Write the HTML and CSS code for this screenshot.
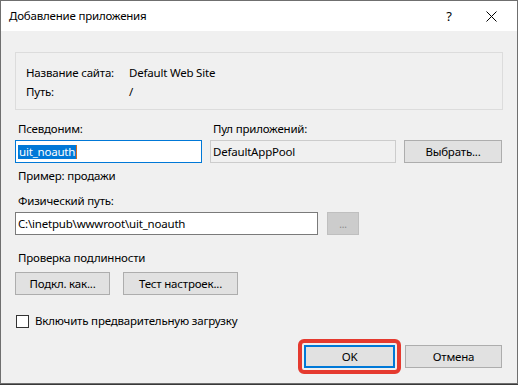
FILE: index.html
```html
<!DOCTYPE html>
<html lang="ru">
<head>
<meta charset="utf-8">
<title>Добавление приложения</title>
<link rel="stylesheet" href="styles.css">
</head>
<body>
<div class="window">
  <div class="titlebar">
    <span class="title">Добавление приложения</span>
    <span class="help">?</span>
    <span class="close"><svg width="11" height="11" viewBox="0 0 11 11"><path d="M0.5 0.5L10.5 10.5M10.5 0.5L0.5 10.5" stroke="#000" stroke-width="1" fill="none"/></svg></span>
  </div>
  <div class="content">
    <div class="groupbox">
      <div class="info-row"><span class="info-label">Название сайта:</span><span>Default Web Site</span></div>
      <div class="info-row"><span class="info-label">Путь:</span><span>/</span></div>
    </div>

    <div class="pair-row">
      <div class="col col-alias">
        <div class="label">Псевдоним:</div>
        <div class="input input-focus"><span class="selected">uit_noauth</span><span class="caret"></span></div>
      </div>
      <div class="col col-pool">
        <div class="label">Пул приложений:</div>
        <div class="field-row">
          <div class="input input-readonly">DefaultAppPool</div>
          <div class="button btn-select">Выбрать...</div>
        </div>
      </div>
    </div>

    <div class="label example">Пример: продажи</div>

    <div class="label phys-label">Физический путь:</div>
    <div class="field-row">
      <div class="input input-path">C:\inetpub\wwwroot\uit_noauth</div>
      <div class="button btn-browse">...</div>
    </div>

    <div class="label auth-label">Проверка подлинности</div>
    <div class="field-row auth-row">
      <div class="button btn-connect">Подкл. как...</div>
      <div class="button btn-test">Тест настроек...</div>
    </div>

    <label class="check-row"><span class="checkbox"></span><span>Включить предварительную загрузку</span></label>

    <div class="footer">
      <div class="highlight"><div class="button btn-ok">OK</div></div>
      <div class="button btn-cancel">Отмена</div>
    </div>
  </div>
</div>
</body>
</html>
```

FILE: styles.css
```css
* { box-sizing: border-box; }
html, body { margin: 0; padding: 0; }
body {
  width: 518px;
  height: 385px;
  background: #3a3a3a;
  font-family: "Noto Sans", "Liberation Sans", sans-serif;
  font-size: 11.5px;
  letter-spacing: -0.2px;
  color: #000;
  overflow: hidden;
}
.window {
  width: 518px;
  height: 384px;
  border: 1px solid #6f6f6f;
  background: #f0f0f0;
  display: flex;
  flex-direction: column;
}
.titlebar {
  height: 30px;
  background: #fff;
  display: flex;
  align-items: center;
  flex: none;
}
.title {
  padding-left: 8px;
  flex: 1;
  line-height: 16px;
}
.help {
  width: 14px;
  text-align: center;
  margin-right: 30px;
  font-size: 13px;
}
.close {
  display: flex;
  margin-right: 20px;
  margin-top: 1px;
}
.content {
  padding: 0 14px 0 14px;
  display: flex;
  flex-direction: column;
}
.groupbox {
  margin-top: 21px;
  height: 58px;
  border: 1px solid #dcdcdc;
  padding: 10px 0 0 10px;
}
.info-row {
  display: flex;
  line-height: 19px;
}
.info-label { width: 103px; }
.label {
  line-height: 16px;
  padding-left: 3px;
}
.pair-row {
  display: flex;
  gap: 8px;
  margin-top: 11px;
}
.col { display: flex; flex-direction: column; gap: 3px; }
.col-alias { width: 187px; flex: none; }
.col-pool { flex: none; }
.field-row { display: flex; gap: 8px; }
.input {
  height: 23px;
  border: 1px solid #7a7a7a;
  background: #fff;
  line-height: 21px;
  padding-left: 2px;
  white-space: nowrap;
  display: flex;
  align-items: center;
  flex: none;
}
.input-focus { border-color: #0078d7; }
.selected {
  background: #0078d7;
  color: #fff;
  line-height: 14px;
  padding: 0 1px;
}
.caret {
  width: 1px;
  height: 14px;
  background: #d06a20;
}
.input-readonly {
  width: 186px;
  background: #f0f0f0;
  border-color: #cccccc;
}
.button {
  height: 23px;
  border: 1px solid #adadad;
  background: #e1e1e1;
  display: flex;
  align-items: center;
  justify-content: center;
  line-height: 16px;
  flex: none;
}
.btn-select { width: 98px; }
.example { margin-top: 5px; }
.phys-label { margin-top: 9px; margin-bottom: 3px; }
.input-path { width: 303px; padding-left: 2px; }
.field-row .btn-browse { margin-left: 1px; }
.btn-browse {
  width: 32px;
  background: #cccccc;
  border-color: #bfbfbf;
  color: #8a8a8a;
  font-size: 10px;
}
.auth-label { margin-top: 15px; }
.auth-row { gap: 13px; margin-top: 6px; }
.btn-connect { width: 95px; }
.btn-test { width: 115px; }
.check-row {
  display: flex;
  align-items: center;
  gap: 6px;
  margin-top: 18px;
  line-height: 16px;
  padding-left: 1px;
}
.checkbox {
  width: 13px;
  height: 13px;
  border: 1px solid #333;
  background: #fff;
}
.footer {
  display: flex;
  justify-content: flex-end;
  align-items: center;
  gap: 4px;
  margin-top: 10px;
  padding-right: 1px;
}
.highlight {
  border: 4px solid #e53a2f;
  border-radius: 6px;
  padding: 2px;
}
.btn-ok {
  width: 91px;
  border: 2px solid #0078d7;
}
.btn-cancel { width: 97px; }
```
